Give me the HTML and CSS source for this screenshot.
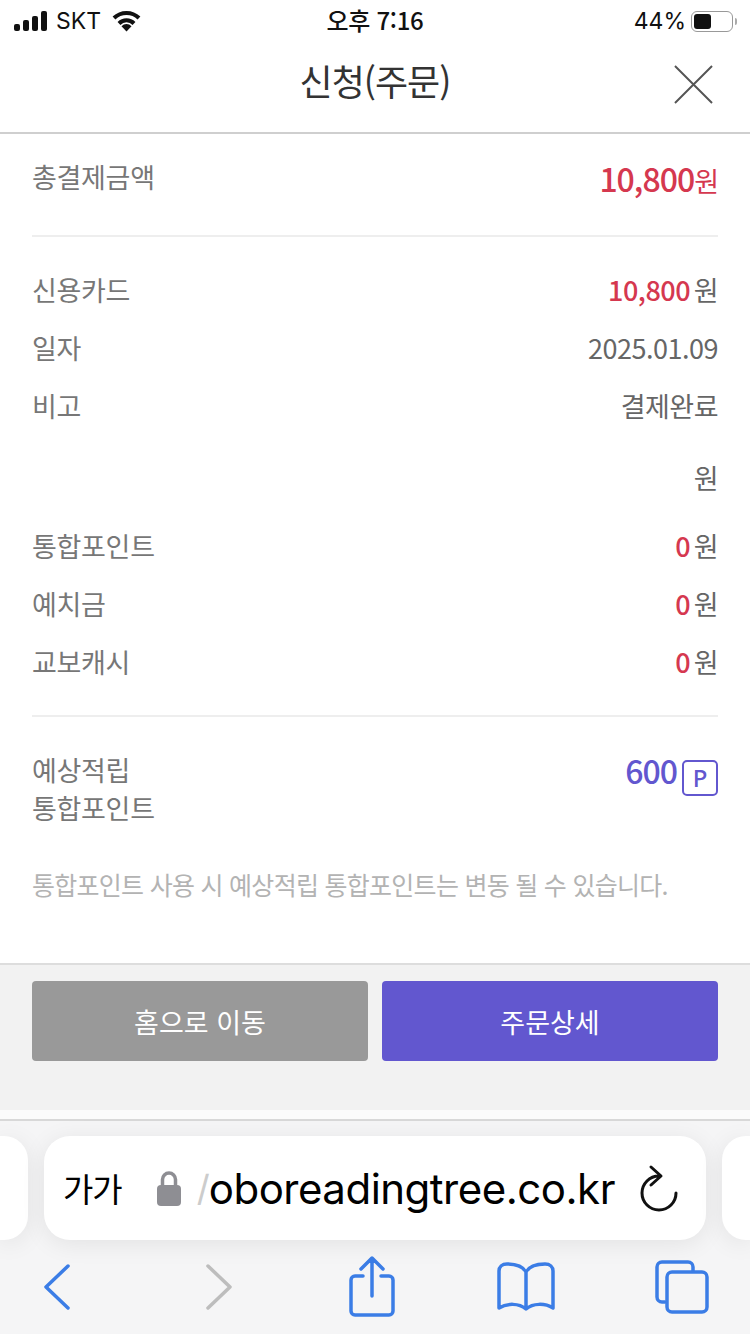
FILE: index.html
```html
<!DOCTYPE html>
<html lang="ko">
<head>
  <meta charset="UTF-8">
  <title>신청(주문)</title>
  <meta name="viewport" content="width=device-width, initial-scale=1.0">
  <link rel="stylesheet" href="styles.css">
</head>
<body>
  <div class="phone">
    <!-- Status bar -->
    <div class="status-bar">
      <div class="status-left">
        <svg class="signal" viewBox="0 0 34 20"><rect x="0" y="13" width="6" height="7" rx="2"/><rect x="9" y="9" width="6" height="11" rx="2"/><rect x="18" y="5" width="6" height="15" rx="2"/><rect x="27" y="0" width="6" height="20" rx="2"/></svg>
        <span>SKT</span>
        <svg class="wifi" viewBox="0 0 30 22"><path class="wifi-arc" d="M2.500 8a18 18 0 0 1 25 0"/><path class="wifi-arc" d="M7.500 13.500a10.500 10.500 0 0 1 15 0"/><path d="M15 21.500L10 16.200a7 7 0 0 1 10 0z"/></svg>
      </div>
      <div class="status-time">오후 7:16</div>
      <div class="status-right">
        <span>44%</span>
        <div class="battery"><div class="battery-level"></div></div>
        <div class="battery-cap"></div>
      </div>
    </div>

    <!-- Header -->
    <header class="page-header">
      <h1>신청(주문)</h1>
      <svg class="close-icon" viewBox="0 0 40 40"><path d="M1 1l38 38M39 1L1 39"/></svg>
    </header>

    <!-- Order summary -->
    <main class="content">
      <section class="total-row">
        <span class="label">총결제금액</span>
        <span class="total-value"><b>10,800</b><i>원</i></span>
      </section>

      <section class="group pay-group">
        <div class="row"><span class="label">신용카드</span><span class="value"><b class="red">10,800</b> 원</span></div>
        <div class="row"><span class="label">일자</span><span class="value">2025.01.09</span></div>
        <div class="row"><span class="label">비고</span><span class="value">결제완료</span></div>
      </section>

      <section class="group point-group">
        <div class="row row-empty"><span class="label"></span><span class="value">원</span></div>
        <div class="row"><span class="label">통합포인트</span><span class="value"><b class="red">0</b> 원</span></div>
        <div class="row"><span class="label">예치금</span><span class="value"><b class="red">0</b> 원</span></div>
        <div class="row"><span class="label">교보캐시</span><span class="value"><b class="red">0</b> 원</span></div>
      </section>

      <section class="earn-row">
        <span class="label">예상적립<br>통합포인트</span>
        <span class="earn-value"><b>600</b><span class="p-badge">P</span></span>
      </section>

      <p class="note">통합포인트 사용 시 예상적립 통합포인트는 변동 될 수 있습니다.</p>
    </main>

    <!-- Buttons -->
    <div class="actions">
      <button type="button" class="btn btn-gray">홈으로 이동</button>
      <button type="button" class="btn btn-purple">주문상세</button>
    </div>
    <div class="strip"></div>

    <!-- Safari toolbar -->
    <div class="safari">
      <div class="tabs">
        <div class="side-tab side-left"></div>
        <div class="url-bar">
          <span class="aa">가가</span>
          <svg class="lock" viewBox="0 0 24 36"><path class="lock-arc" d="M5.500 16V9.500a6.500 6.500 0 0 1 13 0V16"/><rect x="0" y="15" width="24" height="21" rx="4"/></svg>
          <span class="slash">/</span>
          <span class="url">oboreadingtree.co.kr</span>
          <svg class="reload" viewBox="0 0 40 48"><path d="M11 3l10 9-10 9M19 12A17 17 0 1 0 36 29"/></svg>
        </div>
        <div class="side-tab side-right"></div>
      </div>
      <nav class="toolbar">
        <svg class="tool tool-back" viewBox="0 0 28 46"><path d="M25 2L3 23l22 21"/></svg>
        <svg class="tool tool-forward" viewBox="0 0 28 46"><path d="M3 2l22 21L3 44"/></svg>
        <svg class="tool tool-share" viewBox="0 0 48 62"><path d="M15 20H7a4 4 0 0 0-4 4v31a4 4 0 0 0 4 4h34a4 4 0 0 0 4-4V24a4 4 0 0 0-4-4h-8M24 40V3M13 13L24 2l11 11"/></svg>
        <svg class="tool tool-book" viewBox="0 0 60 50"><path d="M30 10C26 3 18 2 11 2 6 2 3 5 3 9v37c8-5 20-5 27 1 7-6 19-6 27-1V9c0-4-3-7-8-7-7 0-15 1-19 8zM30 10v37"/></svg>
        <svg class="tool tool-tabs" viewBox="0 0 56 56"><path d="M11 43H8a5 5 0 0 1-5-5V8a5 5 0 0 1 5-5h26a5 5 0 0 1 5 5v4"/><rect x="13" y="13" width="40" height="40" rx="5"/></svg>
      </nav>
    </div>
  </div>
</body>
</html>
```

FILE: styles.css
```css
html, body {
  margin: 0;
  padding: 0;
}
body {
  width: 750px;
  height: 1334px;
  overflow: hidden;
  background: #fff;
  font-family: "Noto Sans CJK KR", "Noto Sans", sans-serif;
  color: #666;
}
.phone {
  width: 750px;
  height: 1334px;
  display: flex;
  flex-direction: column;
}
/* Status bar */
.status-bar {
  height: 44px;
  padding: 0 13px 2px 14px;
  box-sizing: border-box;
  display: flex;
  align-items: center;
  justify-content: space-between;
  color: #111;
  font-size: 24px;
  position: relative;
}
.status-left {
  display: flex;
  align-items: center;
  gap: 8px;
  font-family: Inter, sans-serif;
  font-size: 23px;
}
.signal {
  width: 34px;
  height: 20px;
  fill: #111;
}
.wifi {
  width: 31px;
  height: 22px;
  margin-left: 2px;
  fill: #111;
}
.wifi-arc {
  fill: none;
  stroke: #111;
  stroke-width: 4;
}
.status-time {
  position: absolute;
  top: 0;
  left: 0;
  right: 0;
  text-align: center;
  font-weight: 500;
  font-size: 24px;
  line-height: 40px;
  letter-spacing: -.3px;
}
.status-right {
  display: flex;
  align-items: center;
  font-family: Inter, sans-serif;
  font-size: 23px;
}
.battery {
  width: 36px;
  height: 15px;
  margin-left: 5px;
  padding: 2px;
  border: 1.500px solid #999;
  border-radius: 6px;
  box-sizing: content-box;
}
.battery-level {
  width: 17px;
  height: 15px;
  background: #111;
  border-radius: 3px;
}
.battery-cap {
  width: 2px;
  height: 7px;
  margin-left: 2px;
  background: #aaa;
  border-radius: 0 2px 2px 0;
}
/* Header */
.page-header {
  height: 72px;
  border-bottom: 2px solid #cfcfcf;
  position: relative;
  display: flex;
  align-items: center;
  justify-content: center;
  padding-bottom: 16px;
  box-sizing: content-box;
}
.page-header h1 {
  margin: 0;
  font-size: 36px;
  font-weight: 400;
  color: #333;
  letter-spacing: -1px;
}
.close-icon {
  position: absolute;
  top: 21px;
  right: 37px;
  width: 39px;
  height: 39px;
  fill: none;
  stroke: #555;
  stroke-width: 2;
}
/* Content */
.content {
  height: 829px;
  padding: 0 32px;
  box-sizing: border-box;
}
.label {
  font-size: 27px;
  line-height: 38px;
  color: #777;
  letter-spacing: -.3px;
}
.value {
  font-size: 27px;
  line-height: 38px;
  color: #666;
  letter-spacing: -.5px;
  word-spacing: -3.500px;
}
.value b {
  font-weight: 500;
}
.red {
  color: #d5384f;
}
.total-row {
  height: 103px;
  display: flex;
  justify-content: space-between;
  align-items: flex-start;
  padding-top: 24px;
  box-sizing: border-box;
  border-bottom: 2px solid #eee;
}
.total-value {
  line-height: 40px;
  font-size: 32px;
  color: #d5384f;
  letter-spacing: -1px;
}
.total-value b {
  font-weight: 500;
}
.total-value i {
  font-style: normal;
  font-size: 27px;
}
.group {
  display: flex;
  flex-direction: column;
  gap: 20px;
}
.row {
  display: flex;
  justify-content: space-between;
}
.pay-group {
  padding-top: 34px;
}
.point-group {
  padding-top: 34px;
  padding-bottom: 34px;
  border-bottom: 2px solid #eee;
}
.row-empty {
  margin-bottom: 10px;
}
.earn-row {
  padding-top: 34px;
  display: flex;
  justify-content: space-between;
  align-items: flex-start;
}
.earn-value {
  display: flex;
  align-items: flex-start;
  gap: 5px;
  line-height: 38px;
  color: #6257cf;
  font-size: 32px;
  letter-spacing: -1px;
}
.earn-value b {
  font-weight: 500;
}
.p-badge {
  width: 32px;
  height: 32px;
  border: 2px solid #6257cf;
  border-radius: 5px;
  display: flex;
  align-items: center;
  justify-content: center;
  font-family: "Noto Sans", sans-serif;
  font-size: 24px;
  font-weight: 500;
  line-height: 1;
  letter-spacing: 0;
  margin-top: 9px;
}
.note {
  margin: 39px 0 0;
  font-size: 25px;
  line-height: 36px;
  color: #b3b3b3;
  letter-spacing: -.72px;
  white-space: nowrap;
}
/* Buttons */
.actions {
  height: 147px;
  padding: 16px 32px 0;
  box-sizing: border-box;
  background: #f2f2f2;
  border-top: 2px solid #ddd;
  display: flex;
  gap: 14px;
  align-items: flex-start;
}
.btn {
  flex: 1;
  height: 80px;
  border: none;
  border-radius: 4px;
  font-family: inherit;
  font-size: 27px;
  color: #fff;
}
.btn-gray {
  background: #999;
}
.btn-purple {
  background: #6257cf;
}
.strip {
  height: 9px;
  background: #fbfbfb;
}
/* Safari */
.safari {
  flex: 1;
  background: #f5f5f6;
  border-top: 2px solid #d8d8d8;
  display: flex;
  flex-direction: column;
}
.tabs {
  margin-top: 15px;
  height: 104px;
  display: flex;
  justify-content: space-between;
  position: relative;
}
.side-tab {
  width: 28px;
  background: #fff;
  box-shadow: 0 4px 24px rgba(0, 0, 0, .08);
}
.side-left {
  border-radius: 0 24px 24px 0;
}
.side-right {
  border-radius: 24px 0 0 24px;
}
.url-bar {
  width: 662px;
  background: #fff;
  border-radius: 26px;
  box-shadow: 0 4px 24px rgba(0, 0, 0, .08);
  display: flex;
  align-items: center;
  padding: 0 26px 0 19px;
  box-sizing: border-box;
  color: #000;
}
.aa {
  font-size: 33px;
  margin-right: 35px;
  letter-spacing: -1px;
}
.lock {
  width: 24px;
  height: 36px;
  fill: #8e8e93;
}
.lock-arc {
  fill: none;
  stroke: #8e8e93;
  stroke-width: 3.500;
}
.slash {
  margin-left: 16px;
  font-family: Inter, sans-serif;
  font-size: 36px;
  color: #ccc;
  width: 12px;
}
.url {
  flex: 1;
  font-family: Inter, sans-serif;
  font-size: 42px;
  letter-spacing: -.5px;
  white-space: nowrap;
}
.reload {
  width: 40px;
  height: 48px;
  fill: none;
  stroke: #111;
  stroke-width: 3;
  stroke-linecap: round;
  stroke-linejoin: round;
}
.toolbar {
  flex: 1;
  display: flex;
  align-items: center;
  padding-left: 43px;
}
.tool {
  fill: none;
  stroke: #3b7de6;
  stroke-width: 3.500;
  stroke-linecap: round;
  stroke-linejoin: round;
}
.tool-back {
  width: 28px;
  height: 46px;
}
.tool-forward {
  width: 28px;
  height: 46px;
  margin-left: 134px;
  stroke: #bdbdbd;
}
.tool-share {
  width: 48px;
  height: 62px;
  margin-left: 115px;
}
.tool-book {
  width: 60px;
  height: 50px;
  margin-left: 100px;
}
.tool-tabs {
  width: 56px;
  height: 56px;
  margin-left: 98px;
}
```
